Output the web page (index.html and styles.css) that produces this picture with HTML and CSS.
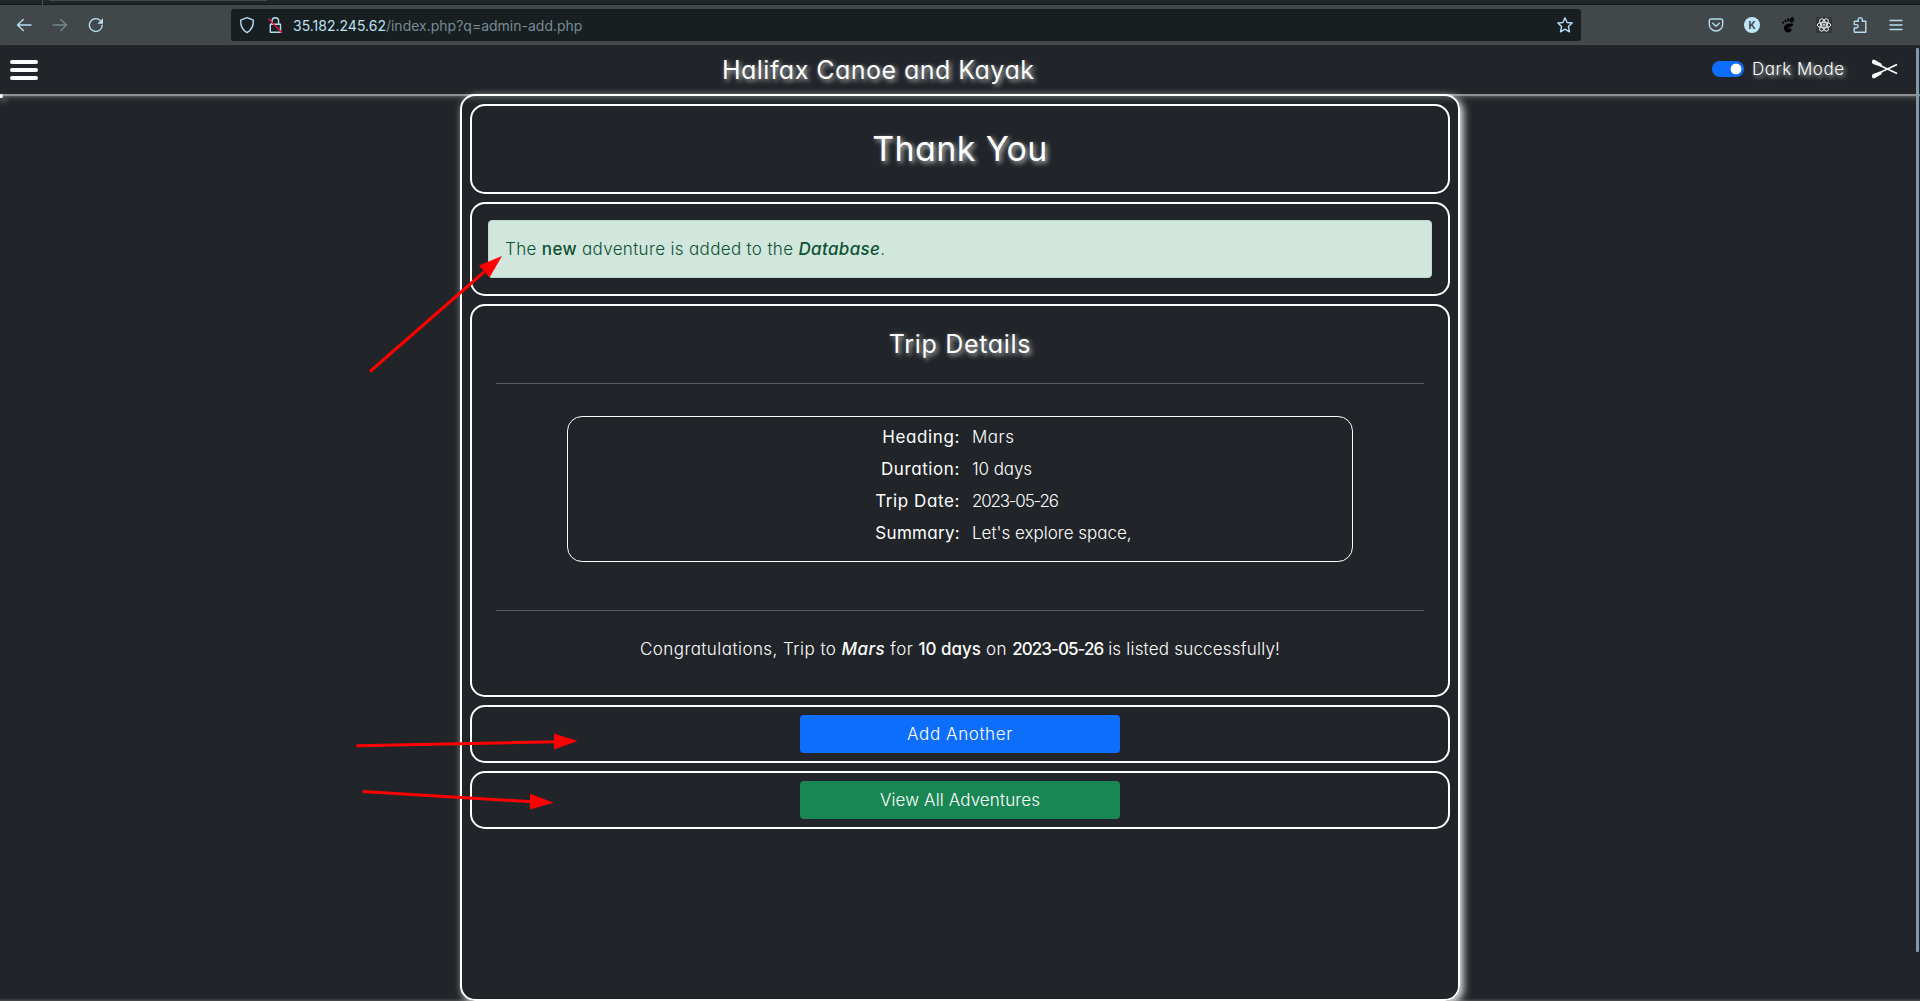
FILE: index.html
```html
<!DOCTYPE html>
<html lang="en">
<head>
<meta charset="utf-8">
<title>Halifax Canoe and Kayak</title>
<link rel="stylesheet" href="styles.css">
</head>
<body>
<div class="tabstrip"><span class="tab-divider"></span><span class="tab-active"></span></div>
<div class="toolbar">
  <div class="nav-buttons">
    <svg width="16" height="16" viewBox="0 0 16 16" class="ico"><path d="M15 8H1.500M7.300 2.400 1.500 8l5.800 5.600"/></svg>
    <svg width="16" height="16" viewBox="0 0 16 16" class="ico dim"><path d="M1 8h13.500M8.700 2.400 14.500 8l-5.800 5.600"/></svg>
    <svg width="16" height="16" viewBox="0 0 16 16" class="ico"><path d="M14.200 8.300A6.400 6.400 0 1 1 12.300 3.500"/><path class="solid" d="M15 1.200v5.600H9.400z"/></svg>
  </div>
  <div class="urlbar">
    <svg width="16" height="18" viewBox="0 0 16 18" class="ico"><path d="M8 1.600 14.300 4.200C14.500 9.500 12.800 14 8 16.600 3.200 14 1.500 9.500 1.700 4.200z"/></svg>
    <svg width="16" height="18" viewBox="0 0 16 18" class="ico lock"><path d="M5 8.300V5a3.300 3.300 0 0 1 6.600 0v3.300M3.300 8.300h10.200v7.900H3.300z"/><path class="slash" d="M1.700 3 14.700 16.500"/></svg>
    <span class="url"><b>35.182.245.62</b><span class="path">/index.php?q=admin-add.php</span></span>
    <svg width="18" height="18" viewBox="0 0 18 18" class="ico star"><path d="M9 1.800 11.100 6.500 16.200 7 12.400 10.500 13.500 15.800 9 13.100 4.500 15.800 5.600 10.500 1.800 7 6.900 6.500z"/></svg>
  </div>
  <div class="extensions">
    <svg width="16" height="16" viewBox="0 0 16 16" class="ico"><path d="M3 2h10a1.700 1.700 0 0 1 1.700 1.700v3.600a6.700 6.700 0 0 1-13.400 0V3.700A1.700 1.700 0 0 1 3 2zM4.700 6.200 8 9.300l3.300-3.100"/></svg>
    <span class="avatar">K</span>
    <svg width="16" height="16" viewBox="0 0 16 16" class="foot"><ellipse cx="12" cy="2.800" rx="2" ry="2.700" transform="rotate(20 12 2.800)"/><ellipse cx="8.400" cy="2.900" rx="1.100" ry="1.900"/><ellipse cx="5.500" cy="4" rx="1" ry="1.600" transform="rotate(-12 5.500 4)"/><ellipse cx="3.100" cy="5.500" rx=".9" ry="1.300" transform="rotate(-20 3.100 5.500)"/><path d="M12.300 6.600C8.500 6 4 7.500 3.900 10.800c0 3 2.700 4.900 4.700 4.700 2.300-.2 3.600-2.500 2.500-3.900-.8-1-1.800-.1-2.500.5-.9-1.100.2-1.800 1.500-2.200 2-.6 4-1.800 2.200-3.300z"/></svg>
    <svg width="16" height="16" viewBox="0 0 16 16" class="react"><ellipse cx="8" cy="8" rx="6.800" ry="2.700"/><ellipse cx="8" cy="8" rx="6.800" ry="2.700" transform="rotate(60 8 8)"/><ellipse cx="8" cy="8" rx="6.800" ry="2.700" transform="rotate(120 8 8)"/><circle cx="8" cy="8" r="1"/></svg>
    <svg width="16" height="18" viewBox="0 0 16 18" class="ico"><path d="M3 5.300h3.300V3.600a2 2 0 0 1 4 0v1.700h3.500v10.900H3a.8.800 0 0 1-.8-.8V12h2.200a1.700 1.700 0 0 0 0-3.400H2.200V6.100a.8.800 0 0 1 .8-.8z"/></svg>
    <svg width="16" height="16" viewBox="0 0 16 16" class="ico"><path d="M2 3.500h12M2 8h12M2 12.500h12"/></svg>
  </div>
</div>

<header class="site-nav">
  <button class="burger" aria-label="Menu"><i></i><i></i><i></i></button>
  <div class="brand">Halifax Canoe and Kayak</div>
  <div class="mode">
    <span class="switch"></span>
    <span class="mode-label">Dark Mode</span>
    <svg class="paddles" width="27" height="20" viewBox="0 0 27 20"><path class="shaft" d="M9 6.500 26 14.500M9 13.500 26 5.500"/><path class="blade" d="M1.500.8 3.500.8 10.500 4.800 11 7 9 7.500 2 5 .9 3.400zM1.500 19.200 3.500 19.200 10.500 15.200 11 13 9 12.500 2 15 .9 16.600z"/></svg>
  </div>
  <span class="drawer-edge"></span>
</header>

<main class="page">
  <section class="card title"><h1>Thank You</h1></section>
  <section class="card notice">
    <div class="alert">The <b>new</b> adventure is added to the <b><em>Database</em></b>.</div>
  </section>
  <section class="card details">
    <h2>Trip Details</h2>
    <hr>
    <dl class="trip">
      <dt>Heading:</dt><dd class="place">Mars</dd>
      <dt>Duration:</dt><dd class="days">10 days</dd>
      <dt>Trip Date:</dt><dd class="date">2023-05-26</dd>
      <dt class="summary">Summary:</dt><dd>Let's explore space,</dd>
    </dl>
    <hr>
    <p class="congrats">Congratulations, Trip to <b><em>Mars</em></b> for <b class="days">10 days</b> on <b class="date">2023-05-26</b><span class="tail"> is listed successfully!</span></p>
  </section>
  <section class="card action"><a class="btn primary">Add Another</a></section>
  <section class="card action"><a class="btn success">View All Adventures</a></section>
</main>
<div class="footer-edge"></div>
<div class="scrollbar"></div>

<svg class="arrows" width="1920" height="1001" viewBox="0 0 1920 1001">
  <path d="M370 371.500 484 272M356.500 745.800 556 741.800M362.500 791.500 533 801.800"/>
  <path class="head" d="M502 256 479 265.500 489.500 277.500zM577.700 741 554 733.500V749.500zM553.600 802.800 530 793.800V809.600z"/>
</svg>
</body>
</html>
```
FILE: styles.css
```css
* { box-sizing: border-box; }

body {
  margin: 0;
  height: 1001px;
  overflow: hidden;
  display: flex;
  flex-direction: column;
  background: #212529;
  color: #fff;
  font: 300 17px/24px Inter, "Open Sans", sans-serif;
  font-feature-settings: "cv11";
  letter-spacing: .4px;
}

b { font-weight: 500; }

/* browser chrome */
.tabstrip {
  flex: none;
  height: 5px;
  display: flex;
  background: #1f2528;
  border-bottom: 1px solid #14191b;
}
.tab-divider { width: 1px; height: 5px; margin-left: 42px; background: #3f5560; }
.tab-active { width: 218px; height: 1px; margin-left: 6px; background: #42474a; }

.toolbar {
  flex: none;
  height: 40px;
  display: flex;
  align-items: center;
  background: #42474a;
}
.ico { flex: none; fill: none; stroke: #b4ddf0; stroke-width: 1.4; stroke-linecap: round; stroke-linejoin: round; }
.ico.dim { stroke: #71858f; }
.ico .solid { fill: #b4ddf0; stroke: none; }
.ico .slash { stroke: #e0173f; }
.nav-buttons { width: 231px; padding-left: 16px; display: flex; gap: 20px; }

.urlbar {
  width: 1350px;
  height: 32px;
  padding: 0 7px 0 8px;
  display: flex;
  align-items: center;
  border-radius: 3px;
  background: #191e21;
}
.lock { margin-left: 12px; }
.url {
  margin: 1px 0 0 10px;
  flex: 1;
  font-size: 14px;
  font-weight: 400;
  font-feature-settings: normal;
  letter-spacing: 0;
  color: #b9e2f5;
}
.url b { font-weight: 400; }
.url .path { color: #768b95; }

.extensions { flex: 1; padding: 0 16px 0 127px; display: flex; align-items: center; justify-content: space-between; }
.avatar {
  width: 16px;
  height: 16px;
  border-radius: 50%;
  background: #bde6fa;
  color: #42474a;
  font: 700 10px/16px Inter, sans-serif;
  letter-spacing: 0;
  text-align: center;
}
.foot { fill: #000; }
.react { background: #333638; fill: none; stroke: #e8e8e8; stroke-width: 1; }

/* site navigation */
.site-nav {
  position: relative;
  z-index: 2;
  flex: none;
  height: 49px;
  padding: 0 22px 0 10px;
  display: grid;
  grid-template-columns: 712px 312px 1fr;
  align-items: center;
  background: #212529;
  box-shadow: 0 2px 1px rgba(255, 255, 255, .38), 0 3px 6px rgba(255, 255, 255, .25);
}
.burger { width: 28px; padding: 0; border: 0; background: none; display: grid; gap: 4px; margin-top: 1px; }
.burger i { height: 4px; border-radius: 2px; background: #fff; }
.brand {
  font-size: 25px;
  font-weight: 400;
  line-height: 30px;
  letter-spacing: .47px;
  white-space: nowrap;
  text-shadow: 2px 2px 5px rgba(255, 255, 255, .75);
}
.mode { display: flex; align-items: center; justify-content: flex-end; margin-top: -1px; }
.switch { width: 32px; height: 16px; border-radius: 8px; background: radial-gradient(circle at 24px 8px, #fff 5px, #0d6efd 5.800px); }
.mode-label {
  width: 92px;
  margin: -1px 0 0 8px;
  letter-spacing: .5px;
  white-space: nowrap;
  text-shadow: 2px 2px 4px rgba(255, 255, 255, .75);
}
.paddles { margin-left: 27px; }
.paddles .shaft { fill: none; stroke: #fff; stroke-width: 1.5; }
.paddles .blade { fill: #fff; }
.drawer-edge {
  position: absolute;
  left: -2px;
  top: 49px;
  width: 5px;
  height: 4px;
  border-radius: 2px;
  background: #fff;
  box-shadow: 2px 3px 7px rgba(255, 255, 255, .6);
}

/* content */
.page {
  position: relative;
  z-index: 3;
  width: 1000px;
  height: 907px;
  flex: none;
  margin: 0 auto;
  padding: 8px;
  border: 2px solid #fff;
  border-radius: 15px;
  display: flex;
  flex-direction: column;
  gap: 8px;
  box-shadow: 3px 3px 8px rgba(255, 255, 255, .95);
  background: linear-gradient(#50565a, #2b3033 4px, #212529 8px);
}
.card { flex: none; border: 2px solid #fff; border-radius: 15px; background: #212529; text-align: center; }
h1, h2 { margin: 0; font-weight: 400; text-shadow: 2px 2px 5px rgba(255, 255, 255, .75); }
.title { height: 90px; padding-top: 23px; }
h1 { font-size: 34px; line-height: 40px; letter-spacing: .4px; }
.notice { height: 94px; padding: 16px; }
.alert {
  height: 58px;
  padding: 15px 16px;
  border: 1px solid #badbcc;
  border-radius: 4px;
  background: #d1e7dd;
  color: #0f5132;
  text-align: left;
  line-height: 26px;
  letter-spacing: .34px;
}

.details { height: 393px; padding: 24px; }
h2 { margin-top: -1px; font-size: 25px; line-height: 30px; letter-spacing: .7px; }
hr { height: 1px; margin: 0; border: 0; background: #585c5f; }
.details h2 + hr { margin-top: 24px; }
.trip {
  width: 786px;
  height: 146px;
  margin: 32px auto 48px;
  padding: 3px 0 0;
  border: 1px solid #fff;
  border-radius: 15px;
  display: grid;
  grid-template-columns: 1fr 1fr;
  grid-auto-rows: 32px;
  column-gap: 12px;
  line-height: 34px;
}
.trip dt { text-align: right; font-weight: 400; letter-spacing: .6px; margin-right: -6px; }
.trip dd { margin: 0 0 0 6px; text-align: left; letter-spacing: 0; }
.trip .place { letter-spacing: .5px; }
.trip .summary { letter-spacing: .3px; }
.trip .date { letter-spacing: -1.200px; }
.trip .days { letter-spacing: -.1px; }
.congrats { margin: 25px 0 0; line-height: 26px; letter-spacing: .45px; white-space: nowrap; }
.congrats .days { letter-spacing: -.05px; }
.congrats .date { letter-spacing: -.95px; }
.congrats .tail { letter-spacing: .2px; }

.action { height: 58px; padding: 8px; display: flex; justify-content: center; }
.btn { width: 320px; height: 38px; border-radius: 4px; line-height: 38px; letter-spacing: .6px; }
.primary { background: #0d6efd; }
.success { background: #198754; letter-spacing: .12px; }

.footer-edge { position: absolute; left: 0; bottom: 0; width: 1920px; height: 3px; background: linear-gradient(#212529, #4b4e51); }
.scrollbar { position: absolute; z-index: 4; right: 1px; top: 48px; width: 3px; height: 904px; border-radius: 1px; background: #7f9bab; }

/* annotation arrows */
.arrows { position: absolute; z-index: 5; left: 0; top: 0; fill: none; stroke: #f00; stroke-width: 3; }
.arrows .head { fill: #f00; stroke: none; }
```
